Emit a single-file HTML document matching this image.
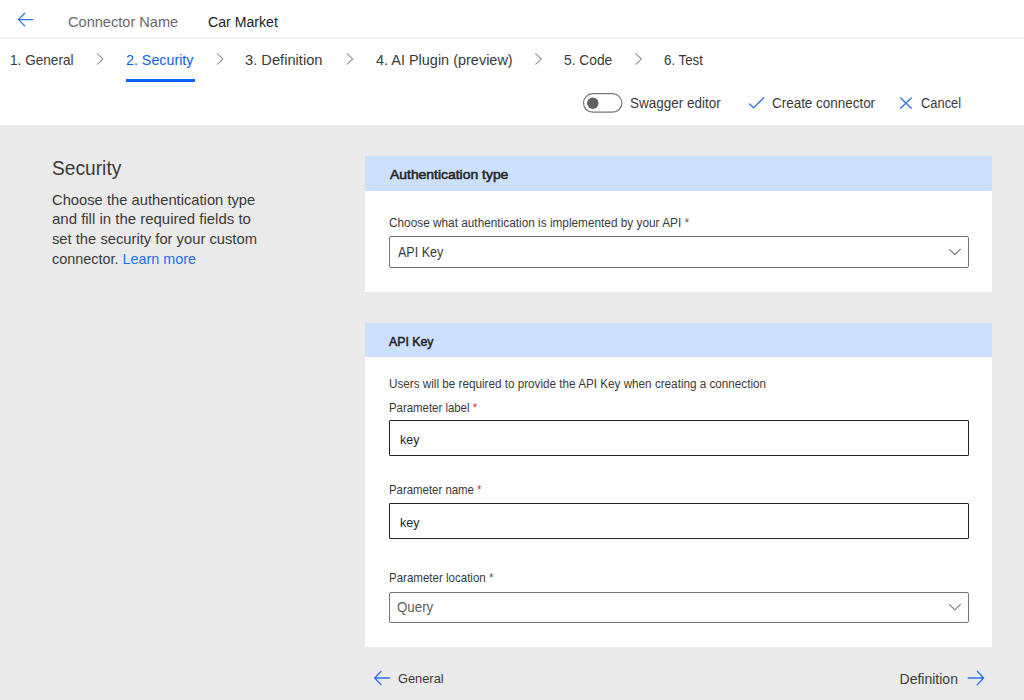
<!DOCTYPE html>
<html><head><meta charset="utf-8">
<style>
html,body{margin:0;padding:0;}
body{width:1024px;height:700px;overflow:hidden;position:relative;background:#fff;font-family:"Liberation Sans",sans-serif;}
.t{position:absolute;white-space:nowrap;line-height:1;transform-origin:0 0;}
.abs{position:absolute;}
#hline{left:0;top:37px;width:1024px;height:1px;background:#efefef;border-bottom:1px solid #f6f6f6;}
#ul{left:126px;top:79px;width:69px;height:3px;background:#0a62f5;}
#gray{left:0;top:125px;width:1024px;height:575px;background:#eaeaea;}
.card{background:#fff;left:365px;width:627px;}
.chd{background:#cce0fc;left:365px;width:627px;}
.box{box-sizing:border-box;left:389px;width:580px;background:#fff;border-radius:2px;}
svg.abs{overflow:visible;}
</style></head><body>
<div class="abs" id="hline"></div>
<div class="abs" id="ul"></div>
<div class="abs" id="gray"></div>
<div class="abs card" style="top:156px;height:136px;"></div>
<div class="abs chd" style="top:156px;height:35px;"></div>
<div class="abs card" style="top:323px;height:324px;"></div>
<div class="abs chd" style="top:323px;height:34px;"></div>
<div class="abs box" style="top:236px;height:32px;border:1px solid #767574;"></div>
<div class="abs box" style="top:420px;height:36px;border:1px solid #252423;border-radius:1px;"></div>
<div class="abs box" style="top:503px;height:36px;border:1px solid #252423;border-radius:1px;"></div>
<div class="abs box" style="top:592px;height:31px;border:1px solid #767574;"></div>
<svg class="abs" style="left:0;top:0" width="1024" height="700" viewBox="0 0 1024 700">
 <g fill="none" stroke-linecap="round" stroke-linejoin="round">
  <!-- back arrow -->
  <path d="M18.5 19.6 L33 19.6 M24.7 13.3 L18.5 19.6 L24.7 25.9" stroke="#2f72f0" stroke-width="1.3"/>
  <!-- tab chevrons -->
  <path d="M97.3 53.6 L103 59 L97.3 64.3" stroke="#979593" stroke-width="1.05"/>
  <path d="M217.3 53.6 L223 59 L217.3 64.3" stroke="#979593" stroke-width="1.05"/>
  <path d="M347 53.6 L352.7 59 L347 64.3" stroke="#979593" stroke-width="1.05"/>
  <path d="M535.6 53.6 L541.3 59 L535.6 64.3" stroke="#979593" stroke-width="1.05"/>
  <path d="M635.7 53.6 L641.4 59 L635.7 64.3" stroke="#979593" stroke-width="1.05"/>
  <!-- toggle -->
  <rect x="583.5" y="93.6" width="38.3" height="18.6" rx="9.3" stroke="#7a7978" stroke-width="1.2"/>
  <circle cx="592.8" cy="103.2" r="5.7" fill="#616161" stroke="none"/>
  <!-- check -->
  <path d="M749.5 104 L753.6 107.7 L763.7 97.8" stroke="#2f72f0" stroke-width="1.3"/>
  <!-- X -->
  <path d="M900.6 98 L911.3 108.3 M911.3 98 L900.6 108.3" stroke="#2f72f0" stroke-width="1.3"/>
  <!-- dropdown chevrons -->
  <path d="M949.3 249.3 L954.8 254.5 L960.4 249.3" stroke="#7a7978" stroke-width="1.05"/>
  <path d="M949.3 604.3 L954.8 609.8 L960.4 604.3" stroke="#7a7978" stroke-width="1.05"/>
  <!-- bottom back arrow -->
  <path d="M374.6 678 L389.6 678 M381 671.5 L374.6 678 L381 684.5" stroke="#2f72f0" stroke-width="1.3"/>
  <!-- forward arrow -->
  <path d="M968.3 678 L983.6 678 M977.3 671.2 L983.6 678 L977.3 684.8" stroke="#2f72f0" stroke-width="1.3"/>
 </g>
</svg>
<div class="t" id="hdr_cn" style="left:67.97px;top:14.23px;font-size:15.2px;font-weight:400;color:#6b6a69;transform:scaleX(0.9596);">Connector Name</div>
<div class="t" id="hdr_car" style="left:208.09px;top:14.23px;font-size:15.2px;font-weight:400;color:#201f1e;transform:scaleX(0.9300);">Car Market</div>
<div class="t" id="tab1" style="left:9.55px;top:52.00px;font-size:15.0px;font-weight:400;color:#3b3a39;transform:scaleX(0.9075);">1. General</div>
<div class="t" id="tab2" style="left:125.99px;top:52.00px;font-size:15.0px;font-weight:400;color:#0a62f5;transform:scaleX(0.9514);">2. Security</div>
<div class="t" id="tab3" style="left:245.46px;top:52.00px;font-size:15.0px;font-weight:400;color:#3b3a39;transform:scaleX(0.9787);">3. Definition</div>
<div class="t" id="tab4" style="left:375.51px;top:52.00px;font-size:15.0px;font-weight:400;color:#3b3a39;transform:scaleX(0.9641);">4. AI Plugin (preview)</div>
<div class="t" id="tab5" style="left:563.65px;top:52.00px;font-size:15.0px;font-weight:400;color:#3b3a39;transform:scaleX(0.9186);">5. Code</div>
<div class="t" id="tab6" style="left:663.84px;top:52.00px;font-size:15.0px;font-weight:400;color:#3b3a39;transform:scaleX(0.8841);">6. Test</div>
<div class="t" id="tb_sw" style="left:630.16px;top:95.75px;font-size:14.0px;font-weight:400;color:#3b3a39;transform:scaleX(0.9642);">Swagger editor</div>
<div class="t" id="tb_cc" style="left:772.13px;top:95.75px;font-size:14.0px;font-weight:400;color:#3b3a39;transform:scaleX(0.9600);">Create connector</div>
<div class="t" id="tb_ca" style="left:920.96px;top:95.75px;font-size:14.0px;font-weight:400;color:#3b3a39;transform:scaleX(0.9200);">Cancel</div>
<div class="t" id="sec_h" style="left:51.53px;top:158.84px;font-size:19.8px;font-weight:400;color:#3b3a39;transform:scaleX(0.9700);">Security</div>
<div class="t" id="d1" style="left:52.06px;top:192.10px;font-size:15.0px;font-weight:400;color:#3b3a39;transform:scaleX(0.9828);">Choose the authentication type</div>
<div class="t" id="d2" style="left:52.20px;top:210.80px;font-size:15.0px;font-weight:400;color:#3b3a39;transform:scaleX(0.9980);">and fill in the required fields to</div>
<div class="t" id="d3" style="left:51.81px;top:231.40px;font-size:15.0px;font-weight:400;color:#3b3a39;transform:scaleX(0.9833);">set the security for your custom</div>
<div class="t" id="d4" style="left:51.52px;top:250.70px;font-size:15.0px;font-weight:400;color:#3b3a39;transform:scaleX(0.9600);">connector. <span style='color:#1a6ffa'>Learn more</span></div>
<div class="t" id="c1h" style="left:390.10px;top:167.69px;font-size:13.6px;font-weight:400;-webkit-text-stroke:0.55px #252423;color:#252423;transform:scaleX(1.0236);">Authentication type</div>
<div class="t" id="c1l" style="left:389.11px;top:216.72px;font-size:12.5px;font-weight:400;color:#3b3a39;transform:scaleX(0.9450);">Choose what authentication is implemented by your API <span style='color:#605e5c'>*</span></div>
<div class="t" id="c1v" style="left:397.60px;top:245.82px;font-size:13.8px;font-weight:400;color:#3b3a39;transform:scaleX(0.9080);">API Key</div>
<div class="t" id="c2h" style="left:388.80px;top:334.79px;font-size:13.6px;font-weight:400;-webkit-text-stroke:0.55px #252423;color:#252423;transform:scaleX(0.9035);">API Key</div>
<div class="t" id="c2d" style="left:388.98px;top:377.84px;font-size:12.0px;font-weight:400;color:#3b3a39;transform:scaleX(0.9746);">Users will be required to provide the API Key when creating a connection</div>
<div class="t" id="c2l1" style="left:388.59px;top:401.90px;font-size:12.4px;font-weight:400;color:#3b3a39;transform:scaleX(0.9200);">Parameter label <span style='color:#e0303c'>*</span></div>
<div class="t" id="c2v1" style="left:399.95px;top:432.99px;font-size:13.6px;font-weight:400;color:#201f1e;transform:scaleX(0.9200);">key</div>
<div class="t" id="c2l2" style="left:388.59px;top:483.50px;font-size:12.4px;font-weight:400;color:#3b3a39;transform:scaleX(0.9200);">Parameter name <span style='color:#e0303c'>*</span></div>
<div class="t" id="c2v2" style="left:399.95px;top:516.29px;font-size:13.6px;font-weight:400;color:#201f1e;transform:scaleX(0.9200);">key</div>
<div class="t" id="c2l3" style="left:388.58px;top:571.50px;font-size:12.4px;font-weight:400;color:#3b3a39;transform:scaleX(0.9300);">Parameter location <span style='color:#605e5c'>*</span></div>
<div class="t" id="c2v3" style="left:397.37px;top:600.72px;font-size:13.8px;font-weight:400;color:#605e5c;transform:scaleX(0.9645);">Query</div>
<div class="t" id="nav_g" style="left:398.06px;top:671.57px;font-size:13.5px;font-weight:400;color:#3b3a39;transform:scaleX(0.9500);">General</div>
<div class="t" id="nav_d" style="left:899.58px;top:671.55px;font-size:14.0px;font-weight:400;color:#3b3a39;">Definition</div>
</body></html>
